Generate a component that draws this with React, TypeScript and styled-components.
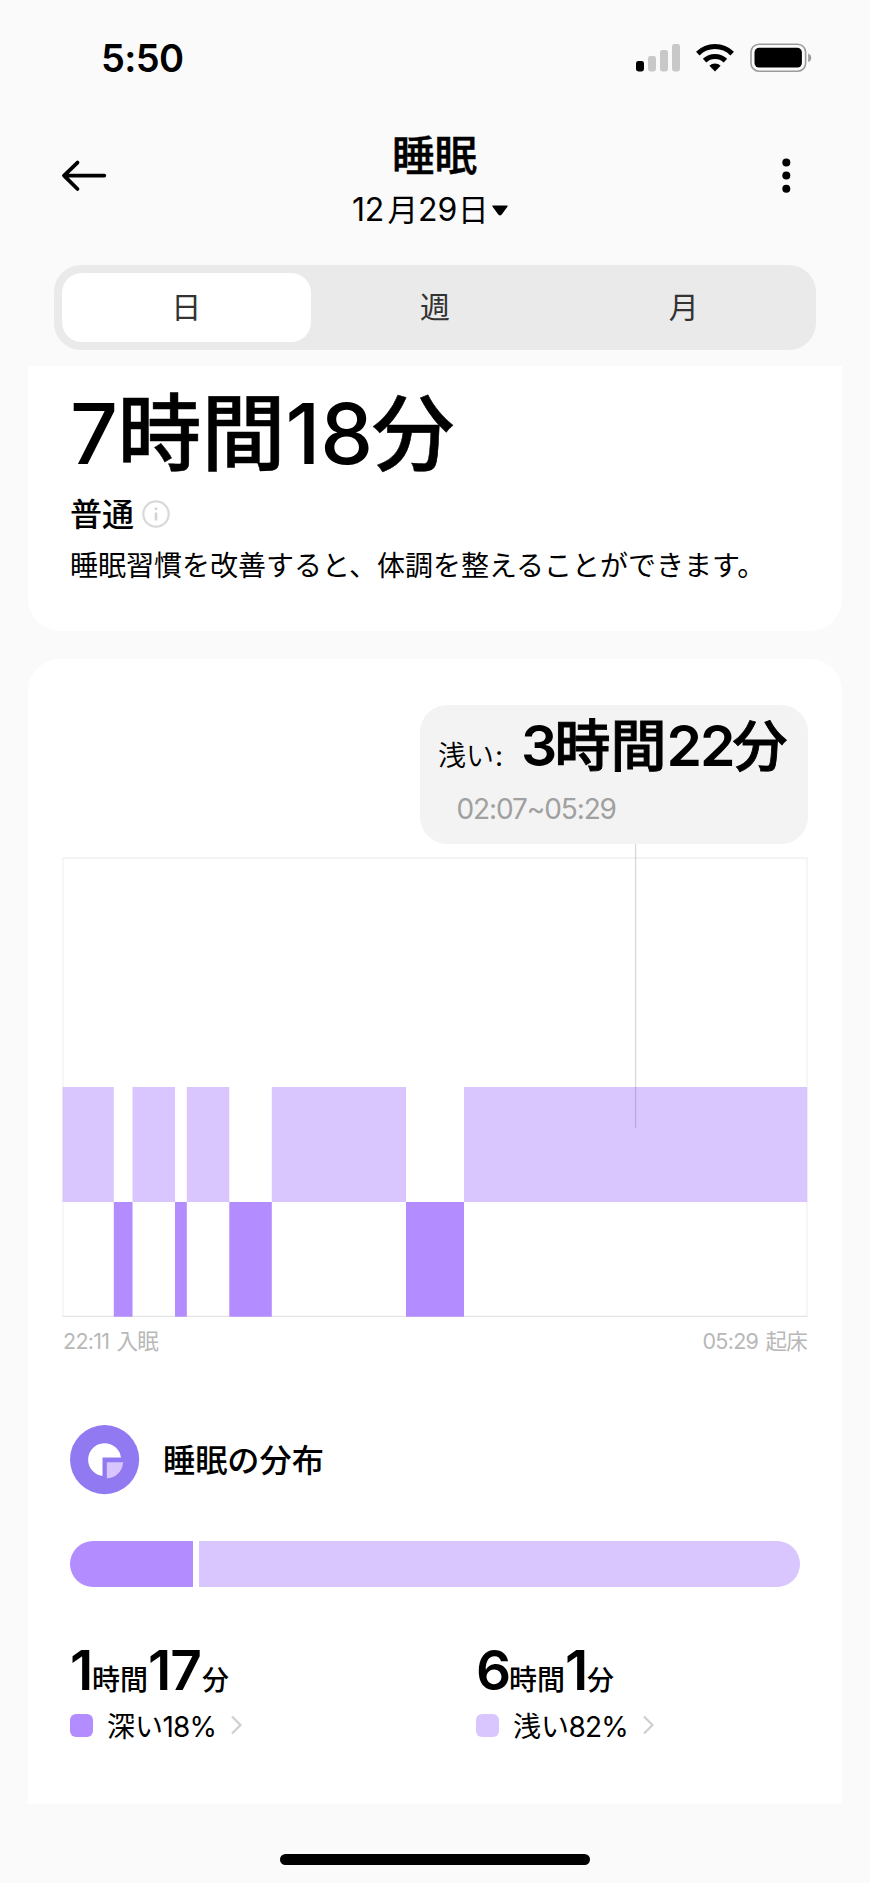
import React from "react";
import styled, { createGlobalStyle } from "styled-components";

const DEEP = "#b38cff";
const LIGHT = "#d9c6ff";

const GlobalStyle = createGlobalStyle`
  *, *::before, *::after { box-sizing: border-box; }
  body {
    margin: 0;
    background: #fafafa;
    color: #000;
    font-family: Inter, "Noto Sans CJK JP", sans-serif;
  }
`;

const Screen = styled.div`
  width: 870px;
  height: 1883px;
  background: #fafafa;
  display: flex;
  flex-direction: column;
  overflow: hidden;
`;

const StatusBar = styled.div`
  height: 115px;
  padding: 34px 58px 0 101px;
  display: flex;
  justify-content: space-between;
  align-items: flex-start;
`;

const Clock = styled.span`
  font-size: 38px;
  line-height: 48px;
  font-weight: 580;
  letter-spacing: -0.6px;
`;

const StatusIcons = styled.svg`
  width: 178px;
  height: 30px;
  margin-top: 9px;
`;

const Header = styled.header`
  height: 150px;
  padding: 0 58px 0 58px;
  display: grid;
  grid-template-columns: 52px 1fr 52px;
`;

const HeaderIcon = styled.svg`
  width: 52px;
  height: 40px;
  margin-top: 40px;
`;

const Titles = styled.div`
  display: flex;
  flex-direction: column;
  align-items: center;
  padding-top: 16px;
`;

const Title = styled.h1`
  margin: 0 1px 0 0;
  font-size: 42.5px;
  line-height: 50px;
  font-weight: 500;
  -webkit-text-stroke: 0.4px currentColor;
`;

const TextRow = styled.div<{ $height: number }>`
  display: flex;
  align-items: baseline;
  height: ${(p) => p.$height}px;
  line-height: ${(p) => p.$height}px;
  white-space: nowrap;
`;

const Run = styled.span<{
  $size: number;
  $width?: number;
  $weight?: number;
  $spacing?: number;
  $stroke?: number;
}>`
  flex: none;
  white-space: nowrap;
  font-size: ${(p) => p.$size}px;
  width: ${(p) => (p.$width ? `${p.$width}px` : "auto")};
  font-weight: ${(p) => p.$weight ?? 400};
  letter-spacing: ${(p) => p.$spacing ?? 0}px;
  -webkit-text-stroke: ${(p) => p.$stroke ?? 0}px currentColor;
`;

const DateRow = styled(TextRow)`
  margin: 4px 10px 0 0;
`;

const Caret = styled.svg`
  width: 16px;
  height: 11px;
  margin-left: 3px;
  align-self: center;
`;

const Tabs = styled.nav`
  margin: 0 54px 16px;
  height: 85px;
  padding: 8px;
  border-radius: 27px;
  background: #eaeaea;
  display: grid;
  grid-template-columns: repeat(3, 1fr);
`;

const Tab = styled.div<{ $active?: boolean }>`
  display: flex;
  justify-content: center;
  border-radius: 20px;
  background: ${(p) => (p.$active ? "#fff" : "transparent")};
  color: #333;
  font-size: 30px;
  line-height: 69px;
`;

const Card = styled.section<{ $radius: string }>`
  margin: 0 28px;
  background: #fff;
  border-radius: ${(p) => p.$radius};
`;

const SummaryCard = styled(Card)`
  height: 265px;
  padding: 18px 42px 0;
  margin-bottom: 28px;
`;

const Quality = styled.div`
  display: flex;
  align-items: center;
  gap: 8px;
  height: 40px;
  margin-top: 11px;
  font-size: 32px;
  line-height: 40px;
  font-weight: 500;
`;

const InfoIcon = styled.svg`
  width: 28px;
  height: 28px;
  margin-top: -2px;
`;

const Advice = styled.p`
  margin: 11px 0 0;
  font-size: 28px;
  line-height: 40px;
  white-space: nowrap;
`;

const ChartCard = styled(Card)`
  height: 1145px;
  padding: 46px 34px 0;
`;

const Tooltip = styled.div`
  width: 388px;
  height: 139px;
  margin-left: auto;
  border-radius: 27px;
  background: #f3f3f3;
  padding: 6px 0 0 18px;
`;

const TooltipTime = styled.div`
  padding-left: 18.5px;
  margin-top: 8px;
  font-size: 28px;
  line-height: 40px;
  letter-spacing: -1.1px;
  color: #a0a0a0;
`;

const Hypnogram = styled.svg`
  display: block;
  width: 746px;
  height: 474px;
`;

const AxisLabels = styled.div`
  display: flex;
  justify-content: space-between;
  margin-top: 8px;
  padding: 0 1px;
  font-size: 21.5px;
  line-height: 30px;
  letter-spacing: -0.7px;
  word-spacing: 1.8px;
  color: #b8b8b8;
`;

const Distribution = styled.div`
  padding: 0 8px;
`;

const SectionTitle = styled.h2`
  margin: 69px 0 0;
  height: 70px;
  display: flex;
  align-items: center;
  gap: 23px;
  font-size: 32.2px;
  line-height: 40px;
  font-weight: 500;
`;

const SectionLabel = styled.span`
  padding-top: 2px;
`;

const PieBadge = styled.svg`
  width: 70px;
  height: 70px;
`;

const StageBar = styled.div`
  display: flex;
  gap: 6px;
  height: 46px;
  width: 730px;
  margin-top: 46px;
  border-radius: 23px;
  overflow: hidden;
`;

const StageShare = styled.div<{ $color: string; $width: number }>`
  width: ${(p) => p.$width}px;
  background: ${(p) => p.$color};
`;

const Stats = styled.div`
  display: grid;
  grid-template-columns: 406px 1fr;
  margin-top: 50px;
`;

const Legend = styled.div`
  display: flex;
  align-items: center;
  height: 40px;
  margin-top: 2px;
`;

const Swatch = styled.span<{ $color: string }>`
  width: 23px;
  height: 23px;
  border-radius: 6px;
  background: ${(p) => p.$color};
  margin-right: 14px;
`;

const LegendText = styled.span`
  display: flex;
  padding-top: 3px;
  line-height: 40px;
`;

const Chevron = styled.svg`
  width: 14px;
  height: 22px;
`;

const HomeIndicator = styled.div`
  width: 310px;
  height: 11px;
  margin: 50px auto 0;
  border-radius: 6px;
  background: #000;
`;

const segments = [
  { deep: false, from: 0.5, to: 51.8 },
  { deep: true, from: 51.8, to: 70.5 },
  { deep: false, from: 70.5, to: 113 },
  { deep: true, from: 113, to: 124.8 },
  { deep: false, from: 124.8, to: 167.3 },
  { deep: true, from: 167.3, to: 209.8 },
  { deep: false, from: 209.8, to: 344 },
  { deep: true, from: 344, to: 402 },
  { deep: false, from: 402, to: 745.2 },
];

const SleepChart = () => (
  <Hypnogram viewBox="0 0 746 474">
    <path d="M1 472.5V14H745V472.5" fill="none" stroke="#f1f1f1" strokeWidth="1.3" />
    <path d="M0.5 472.4H745.5" stroke="#e4e4e4" strokeWidth="1.3" />
    {segments.map((s) => (
      <rect
        key={s.from}
        x={s.from}
        y={s.deep ? 358 : 243}
        width={s.to - s.from}
        height={s.deep ? 114.7 : 115}
        fill={s.deep ? DEEP : LIGHT}
      />
    ))}
    <path d="M573.6 0V283.7" stroke="#000" strokeOpacity="0.15" strokeWidth="1.3" />
  </Hypnogram>
);

type StatProps = {
  color: string;
  hours: string;
  hoursWidth: number;
  minutes: string;
  minutesWidth: number;
  label: string;
  share: string;
  shareWidth: number;
};

const Stat = (p: StatProps) => (
  <div>
    <TextRow $height={66}>
      <Run $size={55} $weight={560} $width={p.hoursWidth}>{p.hours}</Run>
      <Run $size={28} $weight={500} $width={56}>時間</Run>
      <Run $size={55} $weight={560} $width={p.minutesWidth} $spacing={-1}>{p.minutes}</Run>
      <Run $size={27} $weight={500}>分</Run>
    </TextRow>
    <Legend>
      <Swatch $color={p.color} />
      <LegendText>
        <Run $size={28} $width={55.5}>{p.label}</Run>
        <Run $size={28} $width={p.shareWidth} $spacing={-0.8}>{p.share}</Run>
      </LegendText>
      <Chevron viewBox="0 0 14 22">
        <path d="M2 2.5L10.5 11L2 19.5" fill="none" stroke="#cfcfcf" strokeWidth="2.2" />
      </Chevron>
    </Legend>
  </div>
);

export default function App() {
  return (
    <Screen lang="ja">
      <GlobalStyle />
      <StatusBar>
        <Clock>5:50</Clock>
        <StatusIcons viewBox="0 0 178 30">
          <rect x="2" y="18" width="8" height="10.5" rx="2.4" fill="#000" />
          <rect x="14" y="13" width="8" height="15.5" rx="2.4" fill="#c8c8c8" />
          <rect x="26" y="7" width="8" height="21.5" rx="2.4" fill="#c8c8c8" />
          <rect x="38" y="1" width="8" height="27.5" rx="2.4" fill="#c8c8c8" />
          <g fill="none" stroke="#000" strokeWidth="5">
            <path d="M63.8 10.6A24.5 24.5 0 0 1 98.2 10.6" />
            <path d="M70.6 17.6A15 15 0 0 1 91.4 17.6" />
          </g>
          <path d="M75.4 22.8A8 8 0 0 1 86.6 22.8L81 28.4Z" fill="#000" />
          <rect x="117" y="1.2" width="54.6" height="27" rx="8" fill="none" stroke="#9b9b9b" strokeWidth="1.6" />
          <rect x="120.5" y="4.8" width="47.4" height="19.8" rx="4.6" fill="#000" />
          <path d="M174.2 10.4C176.2 11 177.2 12.8 177.2 14.7S176.2 18.4 174.2 19Z" fill="#9b9b9b" />
        </StatusIcons>
      </StatusBar>

      <Header>
        <HeaderIcon viewBox="0 0 52 40">
          <path
            d="M46.3 20.6H6M19.5 7.6L6 20.6L19.5 34"
            fill="none"
            stroke="#000"
            strokeWidth="3.8"
            strokeLinecap="round"
            strokeLinejoin="round"
          />
        </HeaderIcon>
        <Titles>
          <Title>睡眠</Title>
          <DateRow $height={50}>
            <Run $size={32} $width={35.5} $weight={370} $spacing={-0.3}>12</Run>
            <Run $size={30.5} $width={30.5}>月</Run>
            <Run $size={32} $width={40} $weight={370}>29</Run>
            <Run $size={30.5} $width={31}>日</Run>
            <Caret viewBox="0 0 16 11">
              <path d="M1 1.1H15L9 9.3Q8 10.2 7 9.3Z" stroke="#000" strokeWidth="1.4" strokeLinejoin="round" />
            </Caret>
          </DateRow>
        </Titles>
        <HeaderIcon viewBox="0 0 52 40">
          <circle cx="26.3" cy="7.5" r="4" />
          <circle cx="26.3" cy="20.5" r="4" />
          <circle cx="26.3" cy="33.8" r="4" />
        </HeaderIcon>
      </Header>

      <Tabs>
        <Tab $active>日</Tab>
        <Tab>週</Tab>
        <Tab>月</Tab>
      </Tabs>

      <SummaryCard $radius="0 0 32px 32px">
        <TextRow $height={100}>
          <Run $size={84} $weight={540} $width={47.5}>7</Run>
          <Run $size={84} $weight={500} $width={168} $stroke={0.5}>時間</Run>
          <Run $size={84} $weight={540} $width={86}>18</Run>
          <Run $size={83} $weight={500} $stroke={0.5}>分</Run>
        </TextRow>
        <Quality>
          普通
          <InfoIcon viewBox="0 0 28 28">
            <circle cx="14" cy="14" r="12.7" fill="none" stroke="#d9d9d9" strokeWidth="2.2" />
            <path d="M14 12.6V20.4M14 7.6V10" stroke="#d3d3d3" strokeWidth="2.6" />
          </InfoIcon>
        </Quality>
        <Advice>睡眠習慣を改善すると、体調を整えることができます。</Advice>
      </SummaryCard>

      <ChartCard $radius="32px 32px 0 0">
        <Tooltip>
          <TextRow $height={70}>
            <Run $size={28} $width={57} $weight={350}>浅い</Run>
            <Run $size={28} $width={26}>:</Run>
            <Run $size={57} $weight={590} $width={33.5}>3</Run>
            <Run $size={56} $weight={500} $width={112} $stroke={0.9}>時間</Run>
            <Run $size={57} $weight={590} $width={66} $spacing={-2}>22</Run>
            <Run $size={55} $weight={500} $stroke={0.9}>分</Run>
          </TextRow>
          <TooltipTime>02:07~05:29</TooltipTime>
        </Tooltip>
        <SleepChart />
        <AxisLabels>
          <span>22:11 入眠</span>
          <span>05:29 起床</span>
        </AxisLabels>
        <Distribution>
          <SectionTitle>
            <PieBadge viewBox="0 0 70 70">
              <circle cx="34.6" cy="34.6" r="34.6" fill="#9179f2" />
              <path d="M32.5 51A16.5 16.5 0 1 1 51 32.5H32.5Z" fill="#fff" />
              <path d="M36.8 37.3H53A16.3 16.3 0 0 1 36.8 53.3Z" fill={LIGHT} />
            </PieBadge>
            <SectionLabel>睡眠の分布</SectionLabel>
          </SectionTitle>
          <StageBar>
            <StageShare $color={DEEP} $width={123} />
            <StageShare $color={LIGHT} $width={601} />
          </StageBar>
          <Stats>
            <Stat
              color={DEEP}
              hours="1"
              hoursWidth={22}
              minutes="17"
              minutesWidth={54}
              label="深い"
              share="18%"
              shareWidth={67.5}
            />
            <Stat
              color={LIGHT}
              hours="6"
              hoursWidth={33}
              minutes="1"
              minutesWidth={22}
              label="浅い"
              share="82%"
              shareWidth={73.5}
            />
          </Stats>
        </Distribution>
      </ChartCard>
      <HomeIndicator />
    </Screen>
  );
}
